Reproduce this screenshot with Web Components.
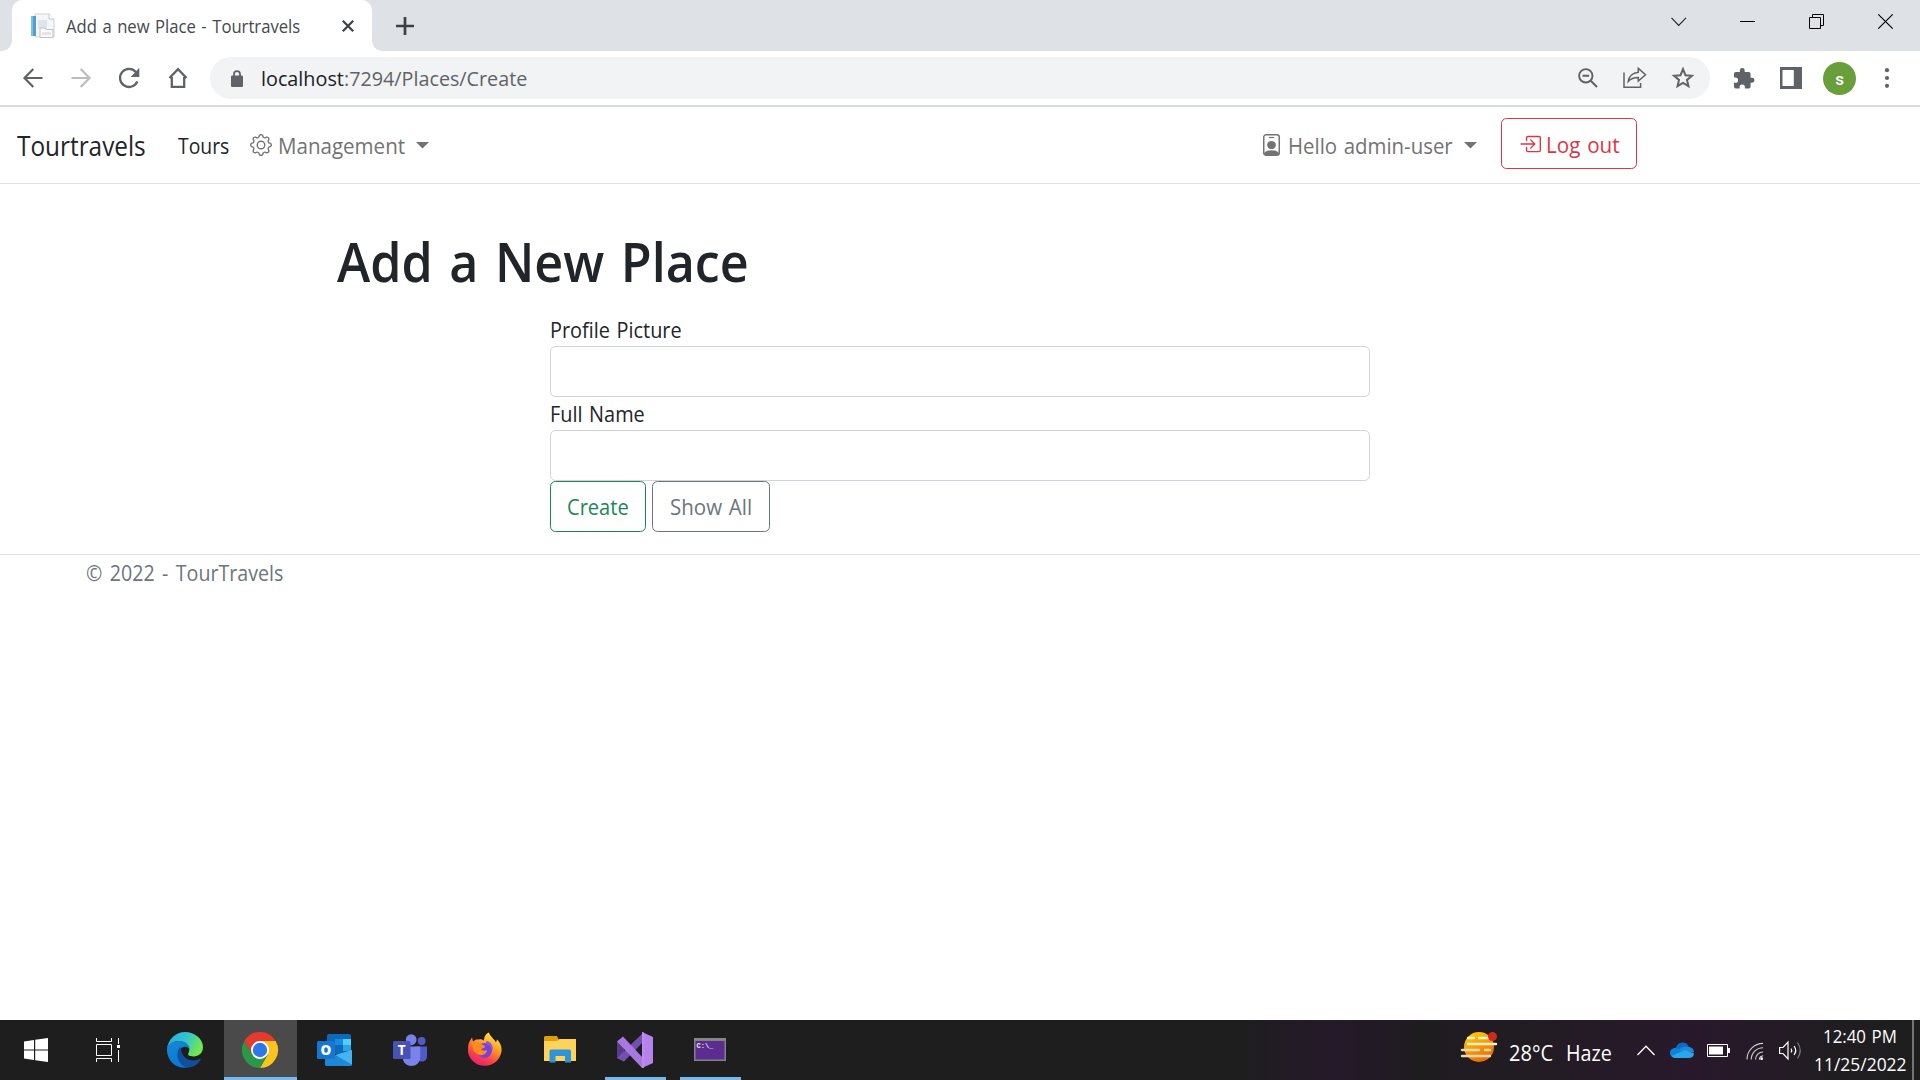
<!DOCTYPE html>
<html lang="en">
<head>
<meta charset="utf-8">
<title>Add a new Place - Tourtravels</title>
<style>
html,body{margin:0;height:100%;overflow:hidden;background:#fff}
body{font-family:"Open Sans","Noto Sans",sans-serif;font-weight:370;color:#212529}
</style>
</head>
<body>
<desktop-screen></desktop-screen>
<script>
const ICONS={
fav:['0 0 24 24','<path d="M5 0h14l5 5v18H5z" fill="#f5f6f7" stroke="#cfd3d6"/><path d="M19 0v5h5" fill="#fff" stroke="#c4c8cb"/><path d="M8 6h9v9H8z" fill="#dfe4ea"/><path d="M1 2h5v20H1z" fill="#4f9fd2"/><path d="M1 2h2v20H1z" fill="#86bde0"/><path d="M10 14h5l1 1.500h7v8H10z" fill="#fafafa" stroke="#bfc3c6"/><path d="M12 18h9v3h-9z" fill="#e3e6e9"/>'],
x:['0 0 12 12','<path d="M.8.8l10.400 10.400M11.200.8L.8 11.200" stroke="#3c4043" stroke-width="2.200"/>'],
plus:['0 0 18 18','<path d="M9 0v18M0 9h18" stroke="#3c4043" stroke-width="2.700"/>'],
back:['0 0 20 20','<path d="M19.500 10H1.800M10.300 1L1.500 10l8.800 9" fill="none" stroke="currentColor" stroke-width="2.200"/>'],
fwd:['0 0 20 20','<path d="M.5 10h17.700M9.700 1l8.800 9-8.800 9" fill="none" stroke="currentColor" stroke-width="2.200"/>'],
reload:['0 0 22 22','<path d="M19.300 14.500A9 9 0 1 1 17.800 5" fill="none" stroke="#5f6368" stroke-width="2.300"/><path d="M21.300.8v9.200h-8.500z" fill="#5f6368"/>'],
home:['0 0 20 22','<path d="M1.500 11L10 2.200 18.500 11M3.800 10v9.800h12.400V10" fill="none" stroke="#5f6368" stroke-width="2.300"/>'],
lock:['0 0 12 17','<path d="M3 7V4.200a3 3 0 0 1 6 0V7" fill="none" stroke="#5f6368" stroke-width="1.800"/><rect y="5.500" width="12" height="11.500" rx="1.300" fill="#5f6368"/>'],
zoomout:['0 0 20 20','<circle cx="7.800" cy="7.800" r="6.700" fill="none" stroke="#5f6368" stroke-width="1.900"/><path d="M4.500 7.800h6.600M12.500 12.500l6.500 6.500" stroke="#5f6368" stroke-width="2"/>'],
share:['0 0 24 22','<path d="M1 5.500V20.200h16.600V16" fill="none" stroke="#5f6368" stroke-width="1.500"/><path d="M15.300 1.400l7.200 6.400-7.200 6.300v-3.700c-4.500 0-7.700 1.200-10 4 .6-5 4.500-8.600 10-9.200z" fill="none" stroke="#5f6368" stroke-width="1.500"/>'],
star:['0 0 22 22','<path d="M11 2.200l2.500 6 6.400.5-4.900 4.200 1.500 6.300L11 15.900l-5.500 3.300L7 12.900 2.100 8.700l6.400-.5z" fill="none" stroke="#5f6368" stroke-width="2"/>'],
puzzle:['1 1 21.500 21.500','<path d="M20.500 11H19V7a2 2 0 0 0-2-2h-4V3.500a2.500 2.500 0 0 0-5 0V5H4a2 2 0 0 0-2 2v3.800h1.500a2.700 2.700 0 0 1 0 5.400H2V20a2 2 0 0 0 2 2h3.800v-1.500a2.700 2.700 0 0 1 5.400 0V22H17a2 2 0 0 0 2-2v-4h1.500a2.500 2.500 0 0 0 0-5z" fill="#5f6368"/>'],
panel:['0 0 22 22','<path fill-rule="evenodd" d="M0 0h22v22H0zM2.500 3v16h11.300V3z" fill="#5f6368"/>'],
dots:['0 0 6 22','<circle cx="3" cy="3.200" r="2.100"/><circle cx="3" cy="11" r="2.100"/><circle cx="3" cy="18.800" r="2.100"/>'],
wchev:['0 0 16 10','<path d="M.5.8L7.700 8.500 15 .8" fill="none" stroke="#222" stroke-width="1.100"/>'],
wmin:['0 0 15 15','<path d="M0 7.500h15" stroke="#000"/>'],
wmax:['0 0 15 15','<path d="M.5 3.500h11v11H.5zM3.500 3.500v-3h11v11h-3" fill="none" stroke="#000"/>'],
wclose:['0 0 15 15','<path d="M.3.300l14.400 14.400M14.700.300L.3 14.700" stroke="#000" stroke-width="1.200"/>'],
gear:['0 0 16 16','<path d="M8 4.754a3.246 3.246 0 1 0 0 6.492 3.246 3.246 0 0 0 0-6.492zM5.754 8a2.246 2.246 0 1 1 4.492 0 2.246 2.246 0 0 1-4.492 0z"/><path d="M9.796 1.343c-.527-1.790-3.065-1.790-3.592 0l-.094.319a.873.873 0 0 1-1.255.52l-.292-.16c-1.640-.892-3.433.902-2.540 2.541l.159.292a.873.873 0 0 1-.52 1.255l-.319.094c-1.790.527-1.790 3.065 0 3.592l.319.094a.873.873 0 0 1 .52 1.255l-.16.292c-.892 1.640.901 3.434 2.541 2.540l.292-.159a.873.873 0 0 1 1.255.52l.094.319c.527 1.790 3.065 1.790 3.592 0l.094-.319a.873.873 0 0 1 1.255-.52l.292.16c1.640.893 3.434-.902 2.540-2.541l-.159-.292a.873.873 0 0 1 .52-1.255l.319-.094c1.790-.527 1.790-3.065 0-3.592l-.319-.094a.873.873 0 0 1-.52-1.255l.16-.292c.893-1.640-.902-3.433-2.541-2.540l-.292.159a.873.873 0 0 1-1.255-.52l-.094-.319zm-2.633.283c.246-.835 1.428-.835 1.674 0l.094.319a1.873 1.873 0 0 0 2.693 1.115l.291-.16c.764-.415 1.600.42 1.184 1.185l-.159.292a1.873 1.873 0 0 0 1.116 2.692l.318.094c.835.246.835 1.428 0 1.674l-.319.094a1.873 1.873 0 0 0-1.115 2.693l.16.291c.415.764-.42 1.600-1.185 1.184l-.291-.159a1.873 1.873 0 0 0-2.693 1.116l-.094.318c-.246.835-1.428.835-1.674 0l-.094-.319a1.873 1.873 0 0 0-2.692-1.115l-.292.16c-.764.415-1.600-.42-1.184-1.185l.159-.291A1.873 1.873 0 0 0 1.945 8.930l-.319-.094c-.835-.246-.835-1.428 0-1.674l.319-.094A1.873 1.873 0 0 0 3.060 4.377l-.16-.292c-.415-.764.42-1.600 1.185-1.184l.292.159a1.873 1.873 0 0 0 2.692-1.115l.094-.319z"/>'],
badge:['0 0 16 22','<rect x=".7" y=".7" width="14.600" height="20.600" rx="2.300" fill="none" stroke="currentColor" stroke-width="1.400"/><path d="M5.500 3.500h5" stroke="currentColor" stroke-width="1.200"/><circle cx="8" cy="11" r="4.100"/><path d="M1 19c1.500-2 4-2.700 7-2.700s5.500.7 7 2.700v1l-1.500 1.300h-11L1 20z"/>'],
login:['0 0 16 16','<path d="M6 3.500a.5.5 0 0 1 .5-.5h8a.5.5 0 0 1 .5.5v9a.5.5 0 0 1-.5.5h-8a.5.5 0 0 1-.5-.5v-2a.5.5 0 0 0-1 0v2A1.500 1.500 0 0 0 6.500 14h8a1.500 1.500 0 0 0 1.500-1.500v-9A1.500 1.500 0 0 0 14.500 2h-8A1.500 1.500 0 0 0 5 3.500v2a.5.5 0 0 0 1 0z"/><path d="M11.854 8.354a.5.5 0 0 0 0-.708l-3-3a.5.5 0 1 0-.708.708L10.293 7.500H1.500a.5.5 0 0 0 0 1h8.793l-2.147 2.146a.5.5 0 0 0 .708.708z"/>'],
caret:['0 0 13 7','<path d="M0 0h13L6.500 6.600z"/>'],
win:['0 0 24 24','<path d="M0 3.400l10-1.500v9.600H0zM11.200 1.700L24 0v11.500H11.200zM0 12.500h10V22L0 20.600zM11.200 12.500H24V24l-12.800-1.800z" fill="#fff"/>'],
task:['0 0 24 24','<path d="M.5 0v3.500h15V0M.5 6.500h15v11H.5zM.5 24v-3.500h15V24M22.500 0v6M22.500 12v12" fill="none" stroke="#fff"/><path d="M21 7h3v3h-3z" fill="#fff"/>'],
edge:['0 0 36 36','<defs><linearGradient id="a" x1="0" y1="0" x2="1" y2=".4"><stop stop-color="#2aa9dd"/><stop offset=".55" stop-color="#32c5cf"/><stop offset="1" stop-color="#70e84e"/></linearGradient><linearGradient id="b" x1="0" y1="0" x2=".6" y2="1"><stop stop-color="#138dd2"/><stop offset="1" stop-color="#0875d8"/></linearGradient></defs><path d="M0 17C1 7 9 0 18 0c10 0 18 7 18 15 0 6-4.500 9.500-9.500 9.500-4 0-6.200-1.400-5.300-2.900 2.300-3.700 1.100-9.600-5.200-11.800C9 8 2 10 0 17z" fill="url(#a)"/><path d="M0 18C0 12 6 9 12 9c6.500 0 11 4 10.700 9-.2-3-6.400-5-9.200-.8-3.500 5.500.5 15 9 17.900C10 38.500 0 29 0 18z" fill="url(#b)"/><path d="M13.500 15c-5.500 5-4 17 6.500 20.600 6 .5 11.500-3.500 13.800-8 .3-.7-.4-1-1-.7C24 31 14 26.500 13.500 15z" fill="#114f9e"/>'],
chrome:['0 0 36 36','<path d="M33.600 9H18v9l7.800 4.500L18 36A18 18 0 0 0 33.600 9z" fill="#fcc31e"/><path d="M2.400 9l7.800 13.500L18 27l7.500-4.300L18 36A18 18 0 0 1 2.400 9z" fill="#2a9846"/><path d="M18 9h15.600A18 18 0 0 0 2.400 9l7.800 13.500z" fill="#e33b2e"/><circle cx="18" cy="18" r="9" fill="#fff"/><circle cx="18" cy="18" r="7.200" fill="#2b78e8"/>'],
outlook:['0 0 36 32','<path d="M10 1.500A1.500 1.500 0 0 1 11.500 0h21A1.500 1.500 0 0 1 34 1.500V20H10z" fill="#1068b8"/><path d="M18 5h8v6h-8z" fill="#1a8add"/><path d="M26 5h8v6h-8z" fill="#50d0fb"/><path d="M18 11h8v6h-8z" fill="#1267bb"/><path d="M26 11h8v6h-8z" fill="#28a5e8"/><path d="M8 16l14 7 13-7v14.500a1.500 1.500 0 0 1-1.500 1.500h-24A1.500 1.500 0 0 1 8 30.500z" fill="#1d87d8"/><path d="M35 16v14.500L18 21z" fill="#43b4ef"/><rect y="7" width="18" height="18" rx="1.500" fill="#1478d2"/><text x="9" y="21" text-anchor="middle" font-family="Open Sans" font-weight="800" font-size="13.500" fill="#fff">O</text>'],
teams:['0 0 36 32','<circle cx="29.500" cy="7" r="4" fill="#515bc6"/><circle cx="18.700" cy="5.700" r="5.500" fill="#7980e6"/><path d="M23 12.500h12V22c0 7-9 7-12 2z" fill="#505ac9"/><path d="M10 12.500h18V23c0 12-18 12-18 0z" fill="#7b83eb"/><rect y="7" width="18" height="18" rx="1.500" fill="#4852b5"/><text x="9" y="21" text-anchor="middle" font-family="Open Sans" font-weight="700" font-size="14" fill="#fff">T</text>'],
firefox:['0 0 36 36','<defs><linearGradient id="f" x1=".8" y1="0" x2=".3" y2="1"><stop stop-color="#fff04a"/><stop offset=".4" stop-color="#ff9d24"/><stop offset=".75" stop-color="#fb3e4c"/><stop offset="1" stop-color="#e42073"/></linearGradient></defs><path d="M2 10.500l3-5 1 4 3-2c3 0 5-1 8 1 0-4 2-7 5-8 1 4 5 6 7 10l1-3c4 4 5 8 4.500 12A17 17 0 0 1 1 20C1 16 1 13 2 10.500z" fill="url(#f)"/><circle cx="17.500" cy="18.500" r="7.500" fill="#7543db"/><path d="M5 12l5-2 8 4c0 2-2 2-4 3 1 2 4 2 6 1 0 5-7 7-11 3-3-2-3-6-4-9z" fill="#ff8a1e"/><path d="M17 13c4-3 8 1 8 6 2-4 0-8-5-10z" fill="#9150e5"/>'],
folder:['0 0 32 28','<path d="M0 1.500A1.500 1.500 0 0 1 1.500 0H13l2 4H31v8H0z" fill="#dda00a"/><path d="M0 5h13l2.500-2H32v22H0z" fill="#fed35b"/><path d="M5.500 26.500V15a1.500 1.500 0 0 1 1.500-1.500h18.500A1.500 1.500 0 0 1 27 15v11.500h-6V20h-9.500v6.500z" fill="#2f93da"/>'],
vs:['0 0 36 36','<path d="M0 9.500l7-3.500v23.500L0 26z" fill="#593b89"/><path d="M25 0l11 5v26l-11 5z" fill="#b683ec"/><path d="M0 26l7 3.500L27 9V0z" fill="#7150ae"/><path d="M0 9.500l6-5L27 27v9h-2z" fill="#a778df"/><path d="M25 0l2 .7v34.800L25 36z" fill="#bb8cee"/>'],
cmd:['0 0 32 23','<path d="M0 0h32v23H0z" fill="#858087"/><path d="M1.500 3h29v18.500h-29z" fill="#5b2d91"/><path d="M0 0h32v2H0z" fill="#878787"/><text x="2.500" y="10" font-family="Liberation Mono" font-weight="700" font-size="7" fill="#eee">C:\\_</text>'],
haze:['0 0 36 32','<defs><linearGradient id="s" x1=".2" y1="0" x2=".7" y2="1"><stop stop-color="#ffcf08"/><stop offset="1" stop-color="#e96408"/></linearGradient></defs><circle cx="18" cy="15" r="15" fill="url(#s)"/><path d="M7 6h6M18 6h9M7 12h28" stroke="#fff0c6" stroke-width="2.400" stroke-linecap="round"/><path d="M1 18h17M24 18h5M1 24h28" stroke="#ead9b0" stroke-width="2.400" stroke-linecap="round"/><circle cx="31.500" cy="4.500" r="4.500" fill="#ca2b1c"/>'],
tchev:['0 0 18 11','<path d="M.5 10L9 1.200 17.500 10" fill="none" stroke="#fff" stroke-width="1.300"/>'],
cloud:['0 0 24 16','<path d="M5.500 6.300C7.500-.5 16-2 19 5l-7 5z" fill="#0b6bc4"/><path d="M0 11c0-3 2.500-5.500 6-5 3 .3 6 3 9 5l-9 4.900C2.500 16 0 14 0 11z" fill="#0e82d8"/><path d="M18.500 5c3.500 0 5.500 2.500 5.500 5.300L15 11 9 7.500C12 4 15 4.500 18.500 5z" fill="#1a8bdc"/><path d="M1.500 14L15 8l9 3.500c0 2.500-2 4.400-4.500 4.400h-14C4 16 2.500 15.200 1.500 14z" fill="#28a8ea"/>'],
batt:['0 0 24 13','<path d="M.5.5h20v12H.5z" fill="none" stroke="#fff"/><path d="M2 2.500h14v8H2zM21 4h2v5h-2z" fill="#fff"/>'],
wifi:['0 0 20 20','<path d="M1 18.500A17 17 0 0 1 18 1.500M5.500 18.500A12.500 12.500 0 0 1 18 6M10 18.500a8 8 0 0 1 8-8" fill="none" stroke="#ccc" stroke-width="1.200"/><path d="M14 18.500a4 4 0 0 1 4-4" fill="none" stroke="#fff"/><circle cx="16.500" cy="17.500" r="1.500" fill="#fff"/>'],
vol:['0 0 23 19','<path d="M.6 6.500H4L9 1v17L4 12.500H.6z" fill="none" stroke="#fff" stroke-width="1.200"/><path d="M12 7.500q1.500 2 0 4M15 5q3.500 4.500 0 9" fill="none" stroke="#fff" stroke-width="1.200"/><path d="M18.500 1.500q5.500 8 0 16" fill="none" stroke="#777" stroke-width="1.200"/>']
};
class UiIcon extends HTMLElement{
  connectedCallback(){
    if(this.shadowRoot)return;
    const [vb,body]=ICONS[this.getAttribute('name')];
    this.attachShadow({mode:'open'}).innerHTML=`<style>:host{display:block;flex:none;width:${this.getAttribute('w')}px;height:${this.getAttribute('h')}px}svg{display:block;width:100%;height:100%;fill:currentColor;overflow:visible}</style><svg viewBox="${vb}" preserveAspectRatio="none">${body}</svg>`;
  }
}
customElements.define('ui-icon',UiIcon);

/* A single line of text condensed or widened to the given advance width. */
class FitText extends HTMLElement{
  connectedCallback(){
    if(this.shadowRoot)return;
    const w=+this.getAttribute('w');
    this.attachShadow({mode:'open'}).innerHTML=`<style>:host{display:block;flex:none;width:${w}px;font-size:${this.getAttribute('size')||22}px;white-space:pre;word-spacing:.07em}span{display:inline-block;transform-origin:0 50%}</style><span><slot></slot></span>`;
    const s=this.shadowRoot.querySelector('span');
    s.style.transform=`scaleX(${w/s.offsetWidth})`;
  }
}
customElements.define('fit-text',FitText);

const define=(name,css,html)=>customElements.define(name,class extends HTMLElement{
  connectedCallback(){
    if(this.shadowRoot)return;
    this.attachShadow({mode:'open'}).innerHTML=`<style>*{box-sizing:border-box}${css}</style>${html}`;
  }
});

define('tab-strip',`
:host{display:flex;height:51px;background:#dee1e6;align-items:center;padding-left:12px}
.tab{width:360px;height:51px;background:#fff;border-radius:10px 10px 0 0;display:flex;align-items:center;padding:0 18px 0;position:relative;color:#45494d}
.tab:before,.tab:after{content:"";position:absolute;bottom:0;width:10px;height:10px}
.tab:before{left:-10px;background:radial-gradient(circle at 0 0,#0000 9.500px,#fff 10px)}
.tab:after{right:-10px;background:radial-gradient(circle at 100% 0,#0000 9.500px,#fff 10px)}
fit-text{margin:0 42px 0 12px}
.plus{margin-left:24px}
.win{margin-left:auto;display:flex;align-items:center;padding:0 27px 8px 0;gap:54px}`,
`<div class="tab"><ui-icon name="fav" w="24" h="24"></ui-icon><fit-text w="234" size="18">Add a new Place - Tourtravels</fit-text><ui-icon name="x" w="12" h="12"></ui-icon></div>
<ui-icon class="plus" name="plus" w="18" h="18"></ui-icon>
<div class="win"><ui-icon name="wchev" w="16" h="10" style="margin-right:-1px"></ui-icon><ui-icon name="wmin" w="15" h="15"></ui-icon><ui-icon name="wmax" w="15" h="15"></ui-icon><ui-icon name="wclose" w="15" h="15"></ui-icon></div>`);

define('tool-bar',`
:host{display:flex;height:56px;border-bottom:2px solid #dadbdc;align-items:center;padding:0 30px 0 23px;color:#5f6368}
.nav{display:flex;gap:27.500px;align-items:center;width:187px}
.fwd{color:#babcbe}
.omni{width:1500px;height:42px;border-radius:21px;background:#f1f3f4;display:flex;align-items:center;padding:0 16px 0 21px}
.host{color:#202124;margin-left:18px}
.acts{margin-left:auto;display:flex;gap:25px;align-items:center}
.ext{display:flex;align-items:center;margin-left:23px}
.av{width:33px;height:33px;border-radius:50%;background:#689f38;color:#fff;font:500 17px Roboto,sans-serif;display:flex;align-items:center;justify-content:center;margin:1px 28px 0 21px}`,
`<div class="nav"><ui-icon name="back" w="20" h="20"></ui-icon><ui-icon class="fwd" name="fwd" w="20" h="20"></ui-icon><ui-icon name="reload" w="22" h="22"></ui-icon><ui-icon name="home" w="20" h="22"></ui-icon></div>
<div class="omni"><ui-icon name="lock" w="12" h="17"></ui-icon><fit-text class="host" w="83" size="20.500">localhost</fit-text><fit-text w="183" size="20.500">:7294/Places/Create</fit-text>
<div class="acts"><ui-icon name="zoomout" w="20" h="20"></ui-icon><ui-icon name="share" w="24" h="22"></ui-icon><ui-icon name="star" w="22" h="22"></ui-icon></div></div>
<div class="ext"><ui-icon name="puzzle" w="21" h="21"></ui-icon><ui-icon name="panel" w="22" h="22" style="margin-left:26px"></ui-icon><div class="av">s</div><ui-icon name="dots" w="6" h="22"></ui-icon></div>`);

define('site-nav',`
:host{display:flex;height:77px;border-bottom:1px solid #dee2e6;align-items:center;padding:0 0 0 17px;color:#212529}
.mute{color:#737373;display:flex;align-items:center}
.right{display:flex;align-items:center;margin-left:auto;width:657px}
.out{height:51px;width:136px;border:1px solid #dc3545;border-radius:5.500px;color:#dc3545;display:flex;align-items:center;padding:1px 0 0 17px;margin:-4px 0 0 24px}`,
`<fit-text w="129" size="27">Tourtravels</fit-text><fit-text w="51" style="margin:0 21px 0 32px">Tours</fit-text>
<div class="mute"><ui-icon name="gear" w="22" h="22"></ui-icon><fit-text w="127" style="margin:0 11px 0 6px">Management</fit-text><ui-icon name="caret" w="13" h="7"></ui-icon></div>
<div class="right"><div class="mute"><ui-icon name="badge" w="17" h="22"></ui-icon><fit-text w="165" style="margin:0 11px 0 8px">Hello admin-user</fit-text><ui-icon name="caret" w="13" h="7"></ui-icon></div>
<div class="out"><ui-icon name="login" w="22" h="22"></ui-icon><fit-text w="74" style="margin-left:5px">Log out</fit-text></div></div>`);

define('form-field',`:host{display:block}label{display:flex;height:33px;align-items:center;padding-bottom:1px}input{display:block;width:100%;height:51px;border:1px solid #ced4da;border-radius:5.500px;background:#fff;outline:0;padding:8px 16px}`,
`<label><slot></slot></label><input type="text">`);

define('outline-button',`:host{display:flex;height:51px;box-sizing:border-box;align-items:center;justify-content:center;border:1px solid currentColor;border-radius:5.500px;flex:none;padding-bottom:1px}`,`<slot></slot>`);

define('place-page',`
:host{display:block;height:371px;box-sizing:border-box;padding-top:44px;border-bottom:1px solid #dee2e6}
h1{margin:0 0 0 337px;height:85px;line-height:66px;font-weight:600}
form{width:820px;margin:0 0 0 550px}
.btns{display:flex;gap:6px}`,
`<h1><fit-text w="412" size="54.500">Add a New Place</fit-text></h1>
<form><form-field><fit-text w="132">Profile Picture</fit-text></form-field><form-field><fit-text w="95">Full Name</fit-text></form-field>
<div class="btns"><outline-button style="width:96px;color:#198754"><fit-text w="62">Create</fit-text></outline-button><outline-button style="width:118px;color:#6c757d"><fit-text w="82">Show All</fit-text></outline-button></div></form>`);

define('page-footer',`:host{display:flex;height:33px;align-items:center;padding-left:86px;color:#6c757d}`,`<fit-text w="197" style="word-spacing:.12em">© 2022 - TourTravels</fit-text>`);

define('task-cell',`:host{display:flex;justify-content:center;width:75px;flex:none}
div{width:61px;height:60px;display:flex;align-items:center;justify-content:center;padding-bottom:1px}
:host([open]) div{box-shadow:inset 0 -3px #76b9ed}
:host([active]) div{width:73px;background:#4a4a4a;box-shadow:inset 0 -3px #76b9ed}`,`<div><slot></slot></div>`);

define('task-bar',`
:host{display:flex;height:60px;margin-top:auto;align-items:center;color:#fff;background:linear-gradient(90deg,#1e1e1e 0 1240px,#25192a 1330px,#1f1c20 1420px,#211c22 1520px,#29182c 1700px,#201d21 1830px,#1e1e1e)}
.sys{display:flex;align-items:center;gap:48px;padding:0 27.500px 0 24px}
.tray{margin-left:auto;display:flex;align-items:center;width:459px;height:60px}
.clock{display:flex;flex-direction:column;align-items:center;width:92px;margin-left:12px;line-height:28px}
.end{width:2px;height:60px;background:#747474;margin-left:6px}`,
`<div class="sys"><ui-icon name="win" w="24" h="24"></ui-icon><ui-icon name="task" w="24" h="24"></ui-icon></div>
<task-cell><ui-icon name="edge" w="36" h="36"></ui-icon></task-cell>
<task-cell active><ui-icon name="chrome" w="36" h="36"></ui-icon></task-cell>
<task-cell><ui-icon name="outlook" w="36" h="32"></ui-icon></task-cell>
<task-cell><ui-icon name="teams" w="35" h="32"></ui-icon></task-cell>
<task-cell><ui-icon name="firefox" w="36" h="36"></ui-icon></task-cell>
<task-cell><ui-icon name="folder" w="32" h="28"></ui-icon></task-cell>
<task-cell open><ui-icon name="vs" w="36" h="36"></ui-icon></task-cell>
<task-cell open><ui-icon name="cmd" w="32" h="23"></ui-icon></task-cell>
<div class="tray"><ui-icon name="haze" w="36" h="32" style="margin-bottom:4px"></ui-icon>
<fit-text w="44" size="21" style="margin:5px 13px 0 12px">28°C</fit-text><fit-text w="46" size="21" style="margin:5px 25px 0 0">Haze</fit-text>
<ui-icon name="tchev" w="18" h="11" style="margin-right:15px"></ui-icon><ui-icon name="cloud" w="24" h="16" style="margin-right:13px"></ui-icon><ui-icon name="batt" w="24" h="13" style="margin-right:15px"></ui-icon><ui-icon name="wifi" w="19" h="19" style="margin:3px 14px 0 0"></ui-icon><ui-icon name="vol" w="23" h="19"></ui-icon>
<div class="clock"><fit-text w="74" size="18">12:40 PM</fit-text><fit-text w="93" size="18">11/25/2022</fit-text></div><div class="end"></div></div>`);

define('desktop-screen',`:host{display:flex;flex-direction:column;width:1920px;height:1080px;background:#fff;overflow:hidden}tab-strip,tool-bar,site-nav,place-page,page-footer,task-bar{flex:none;box-sizing:border-box}`,
`<tab-strip></tab-strip><tool-bar></tool-bar><site-nav></site-nav><place-page></place-page><page-footer></page-footer><task-bar></task-bar>`);
</script>
</body>
</html>
